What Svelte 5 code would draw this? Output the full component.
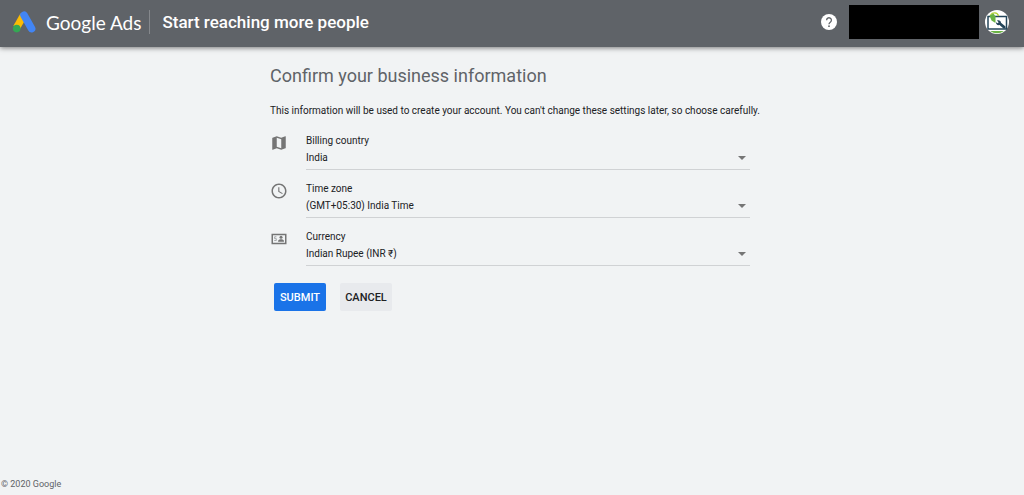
<script>
	const fields = [
		{ id: 'country', label: 'Billing country', icon: 'map', options: ['India'] },
		{ id: 'timezone', label: 'Time zone', icon: 'clock', options: ['(GMT+05:30) India Time'] },
		{ id: 'currency', label: 'Currency', icon: 'money', options: ['Indian Rupee (INR ₹)'] }
	];
</script>

<div class="page">
	<header>
		<a class="brand" href="#home">
			<svg class="logo" viewBox="0 0 24 22" aria-hidden="true">
				<path d="M11.6 4.4 4.6 16.5" stroke="#fbbc04" stroke-width="7.4" />
				<path d="M12 4.2 19.6 17.6" stroke="#4285f4" stroke-width="7.6" stroke-linecap="round" />
				<circle cx="4.7" cy="17.6" r="3.8" fill="#34a853" />
			</svg>
			<span>Google Ads</span>
		</a>
		<span class="title">Start reaching more people</span>
		<button class="help" type="button" aria-label="Help">
			<svg viewBox="0 0 16 16">
				<circle cx="8" cy="8" r="8" fill="#fff" />
				<path d="M5.6 6.2a2.4 2.4 0 1 1 3.7 2C8.4 8.8 8 9.2 8 10.3" fill="none" stroke="#5f6368" stroke-width="1.3" />
				<circle cx="8" cy="12.2" r=".9" fill="#5f6368" />
			</svg>
		</button>
		<div class="account"></div>
		<svg class="avatar" viewBox="0 0 24 24" aria-hidden="true">
			<circle cx="12" cy="12" r="12" fill="#fff" />
			<path d="M3 6.5h18.5v12.5H3z" fill="#fff" stroke="#24455a" stroke-width="1.5" />
			<path d="M5 21h14a12 12 0 0 1-14 0z" fill="#6ab344" />
			<path d="M12 10.5c2-1 4 .3 4 2.3l4.5 3.7v2h-2l-4-3.5c-2 .6-3.7-.8-3.5-2.8l1.8 1 .8-1z" fill="#24455a" />
			<path d="M5.5 5c2-3 7-3 8 1" fill="none" stroke="#b5d334" stroke-width="1.2" />
			<path d="m4.5 5.5 4-2 2 3V13L6.5 10.5 5.5 8z" fill="#6ab344" />
		</svg>
	</header>

	<main>
		<form on:submit|preventDefault>
			<h1>Confirm your business information</h1>
			<p>This information will be used to create your account. You can't change these settings later, so choose carefully.</p>

			{#each fields as f}
				<div class="row">
					<svg class="icon" viewBox="0 0 24 24" aria-hidden="true">
						{#if f.icon == 'map'}
							<path d="M20.5 3l-.16.03L15 5.1 9 3 3.36 4.9c-.21.07-.36.25-.36.48V20.5c0 .28.22.5.5.5l.16-.03L9 18.9l6 2.1 5.64-1.9c.21-.07.36-.25.36-.48V3.5c0-.28-.22-.5-.5-.5zM15 19l-6-2.11V5l6 2.11V19z" />
						{:else if f.icon == 'clock'}
							<path d="M11.99 2C6.47 2 2 6.48 2 12s4.47 10 9.99 10C17.52 22 22 17.52 22 12S17.52 2 11.99 2zM12 20c-4.42 0-8-3.58-8-8s3.58-8 8-8 8 3.58 8 8-3.58 8-8 8zm.5-13H11v6l5.25 3.15.75-1.23-4.5-2.67z" />
						{:else}
							<path d="M2 5h20v14H2zM4 7v10h16V7z" fill-rule="evenodd" />
							<circle cx="14.7" cy="9.8" r="2" />
							<path d="M10.8 15.8v-1c0-2 2.2-2.6 3.9-2.6s3.9.6 3.9 2.6v1z" />
							<path d="M8.6 9H6.2v2.5h2.2V14H5.6" fill="none" stroke="#909396" />
						{/if}
					</svg>
					<div class="field">
						<label for={f.id}>{f.label}</label>
						<div class="select">
							<select id={f.id}>
								{#each f.options as o}
									<option>{o}</option>
								{/each}
							</select>
							<svg class="arrow" viewBox="0 0 8 4" aria-hidden="true"><path d="M0 0h8L4 4z" /></svg>
						</div>
					</div>
				</div>
			{/each}

			<div class="buttons">
				<button class="btn submit" type="submit">SUBMIT</button>
				<button class="btn" type="button">CANCEL</button>
			</div>
		</form>
	</main>

	<footer>© 2020 Google</footer>
</div>

<style>
	:global(body) {
		background: #f1f3f4;
	}
	.page {
		display: flex;
		flex-direction: column;
		min-height: 100vh;
		font-family: Roboto, sans-serif;
		font-size: 10px;
		color: #202124;
	}
	header {
		display: flex;
		align-items: center;
		height: 47px;
		padding: 0 15px 3px 12px;
		box-sizing: border-box;
		background: #5f6368;
		box-shadow: 0 1px 5px rgba(0, 0, 0, 0.5);
		color: #fff;
	}
	.brand {
		display: flex;
		align-items: center;
		gap: 10px;
		height: 24px;
		padding-right: 8px;
		border-right: 1px solid #85888c;
		font-family: Lato, sans-serif;
		font-size: 19px;
		color: #fff;
		text-decoration: none;
	}
	.logo {
		width: 24px;
		height: 22px;
		fill: none;
	}
	.title {
		margin-left: 12px;
		font-size: 17px;
		font-weight: 500;
	}
	.help {
		width: 16px;
		height: 16px;
		margin-left: auto;
		padding: 0;
		border: 0;
		background: none;
	}
	.help svg {
		display: block;
	}
	.account {
		width: 130px;
		height: 34px;
		margin: 0 6px 0 12px;
		background: #000;
	}
	.avatar {
		width: 24px;
		height: 24px;
	}
	main {
		flex: 1;
		padding: 17px 4px 0 0;
	}
	form {
		max-width: 480px;
		margin: 0 auto;
	}
	h1 {
		margin: 0;
		font-size: 18px;
		font-weight: 400;
		line-height: 24px;
		color: #5f6368;
	}
	p {
		margin: 15px 0;
		line-height: 16px;
		white-space: nowrap;
	}
	.row {
		display: flex;
		gap: 16px;
		height: 48px;
	}
	.icon {
		width: 18px;
		height: 18px;
		fill: #757575;
	}
	.field {
		flex: 1;
		margin-left: 2px;
	}
	label {
		display: block;
		line-height: 14px;
	}
	.select {
		position: relative;
	}
	select {
		display: block;
		width: 100%;
		height: 22px;
		padding: 0 0 2px;
		border: 0;
		border-bottom: 1px solid #d0d2d4;
		border-radius: 0;
		appearance: none;
		background: none;
		font: inherit;
		color: inherit;
	}
	.arrow {
		position: absolute;
		top: 8px;
		right: 4px;
		width: 8px;
		height: 4px;
		fill: #757575;
	}
	.buttons {
		display: flex;
		gap: 14px;
		padding: 5px 4px;
	}
	.btn {
		width: 52px;
		height: 28px;
		padding: 0;
		border: 0;
		border-radius: 2px;
		background: #e8eaed;
		font: 500 11px Roboto, sans-serif;
		color: #202124;
	}
	.submit {
		background: #1a73e8;
		color: #fff;
	}
	footer {
		padding: 0 1px 4px;
		font-size: 9px;
		line-height: 14px;
		color: #5f6368;
	}
</style>
